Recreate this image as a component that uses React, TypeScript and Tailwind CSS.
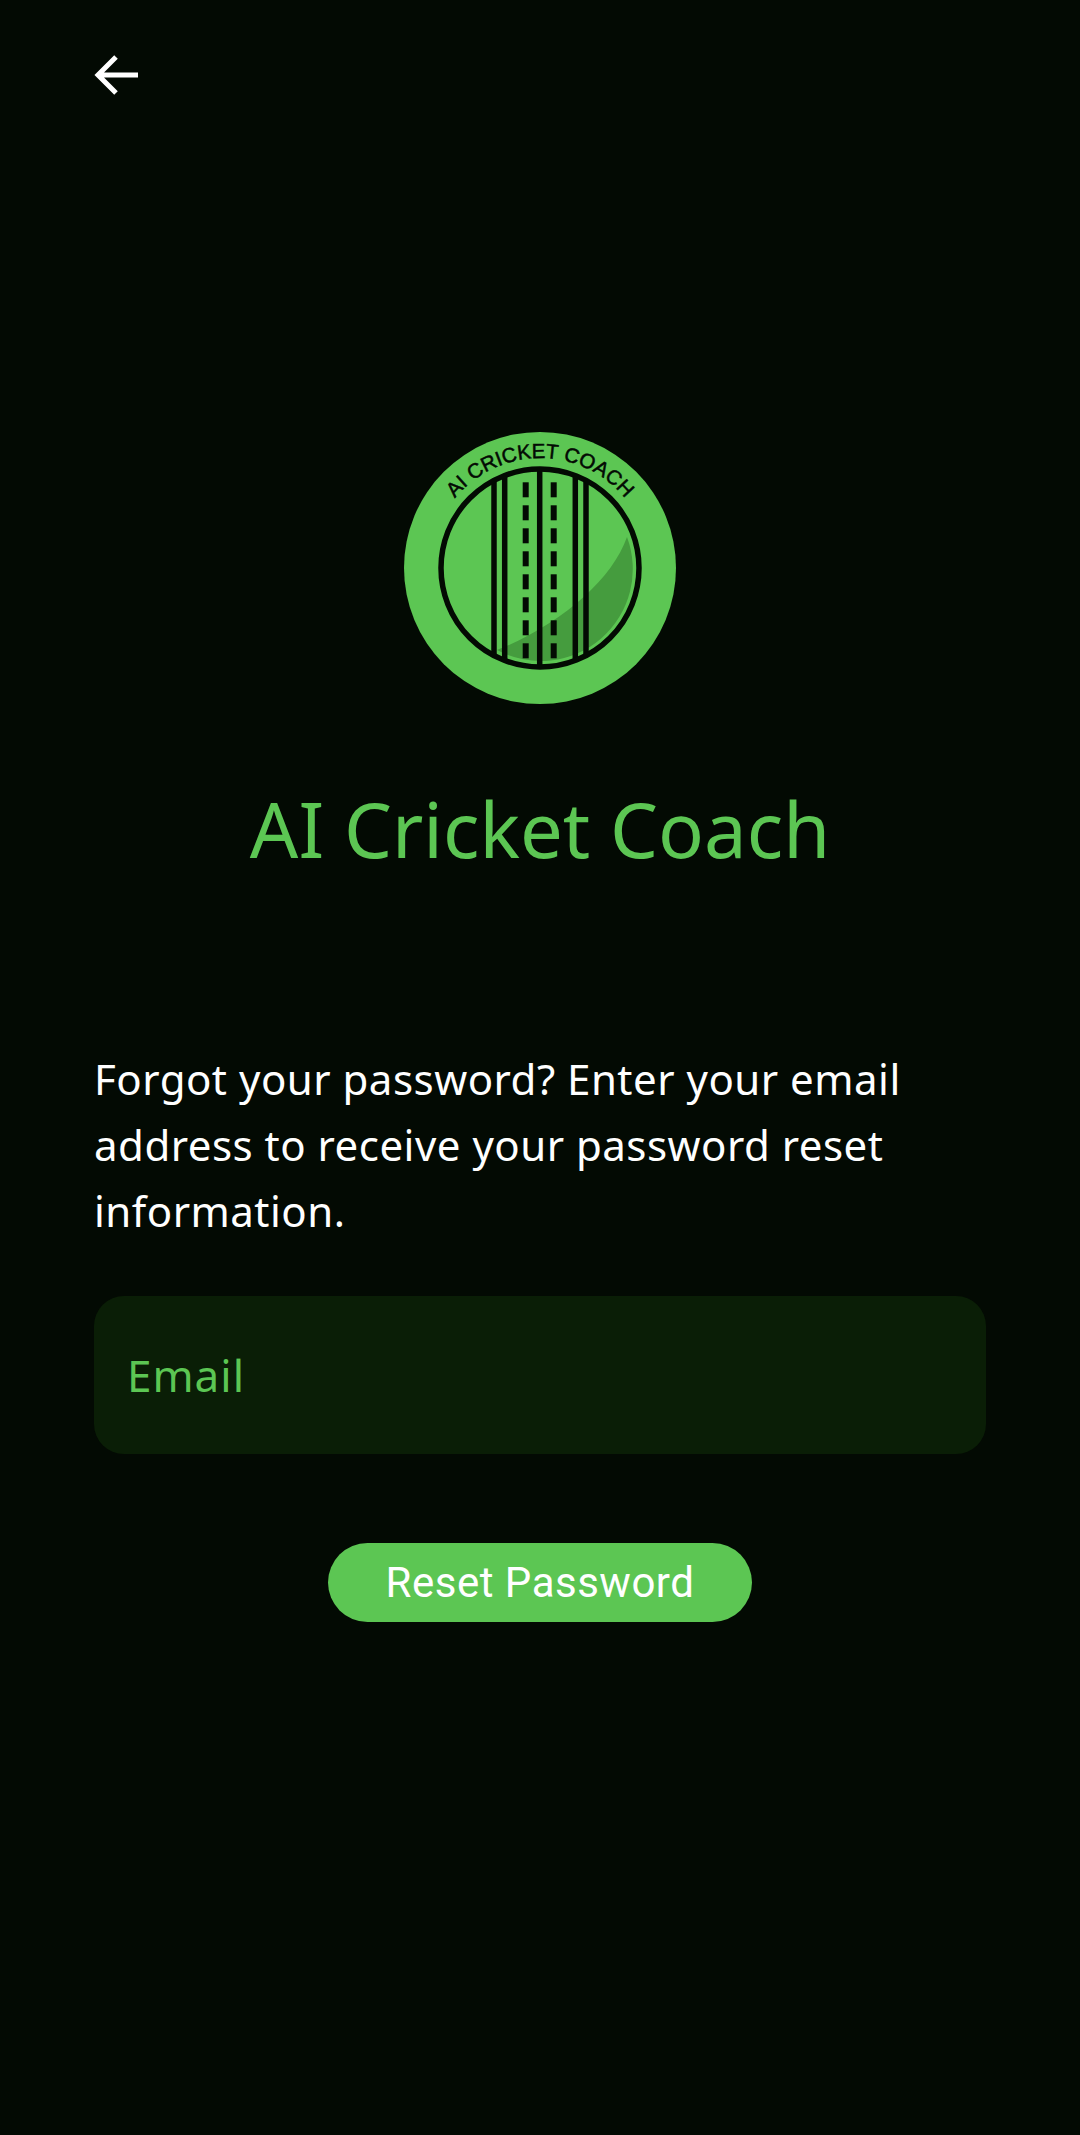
const dashes = [0, 1, 2, 3, 4, 5, 6, 7]

const Logo = () => (
  <svg viewBox="14 12 272 272" className="w-[272px] h-[272px]">
    <defs>
      <clipPath id="ball">
        <circle cx="150" cy="148" r="99" />
      </clipPath>
      <path id="arc" d="M40 148A110 110 0 0 1 260 148" />
    </defs>
    <circle cx="150" cy="148" r="136" fill="#5cc653" />
    <path d="M237 117C222 160 170 205 107 230A92 92 0 0 0 237 117Z" fill="#459c3e" />
    <g clipPath="url(#ball)" stroke="#030a03" strokeWidth="5.5">
      <path d="M104 40V260M114.7 40V260M149.7 40V260M185.3 40V260M196 40V260" />
    </g>
    {dashes.map((i) => (
      <g key={i} fill="#030a03">
        <rect x="132.7" y={62.3 + i * 23} width="6" height="15" />
        <rect x="160.7" y={62.3 + i * 23} width="6" height="15" />
      </g>
    ))}
    <circle cx="150" cy="148" r="99" fill="none" stroke="#030a03" strokeWidth="5.5" />
    <text fill="#030a03" stroke="#030a03" strokeWidth="0.5" fontSize="20.5" fontFamily="'Liberation Sans', sans-serif">
      <textPath href="#arc" startOffset="50%" textAnchor="middle">
        AI CRICKET COACH
      </textPath>
    </text>
  </svg>
)

export default function App() {
  return (
    <div className="min-h-[2135px] bg-[#030a03] px-[94px] font-['Noto_Sans',sans-serif]">
      <button className="pt-[54px] block text-white">
        <svg viewBox="0 0 44 42" className="w-[44px] h-[42px]" fill="none" stroke="currentColor" strokeWidth="5">
          <path d="M44 21H5M22 3L4 21L22 39" />
        </svg>
      </button>

      <div className="mt-[336px] flex flex-col items-center">
        <Logo />
        <h1 className="mt-[80px] text-[76px] leading-[90px] font-normal text-[#5cc653]">AI Cricket Coach</h1>
      </div>

      <p className="mt-[172px] text-[42px] leading-[66px] tracking-[0.5px] text-white">
        Forgot your password? Enter your email address to receive your password reset information.
      </p>

      <div className="mt-[52px] h-[158px] rounded-[30px] bg-[#0a1e06] px-[33px] flex items-center">
        <span className="text-[44px] tracking-[1px] text-[#5cc653]">Email</span>
      </div>

      <div className="mt-[89px] flex justify-center">
        <button className="w-[424px] h-[79px] rounded-full bg-[#5cc653] text-white text-[42px] tracking-[0.5px] font-['Roboto',sans-serif]">
          Reset Password
        </button>
      </div>
    </div>
  )
}
